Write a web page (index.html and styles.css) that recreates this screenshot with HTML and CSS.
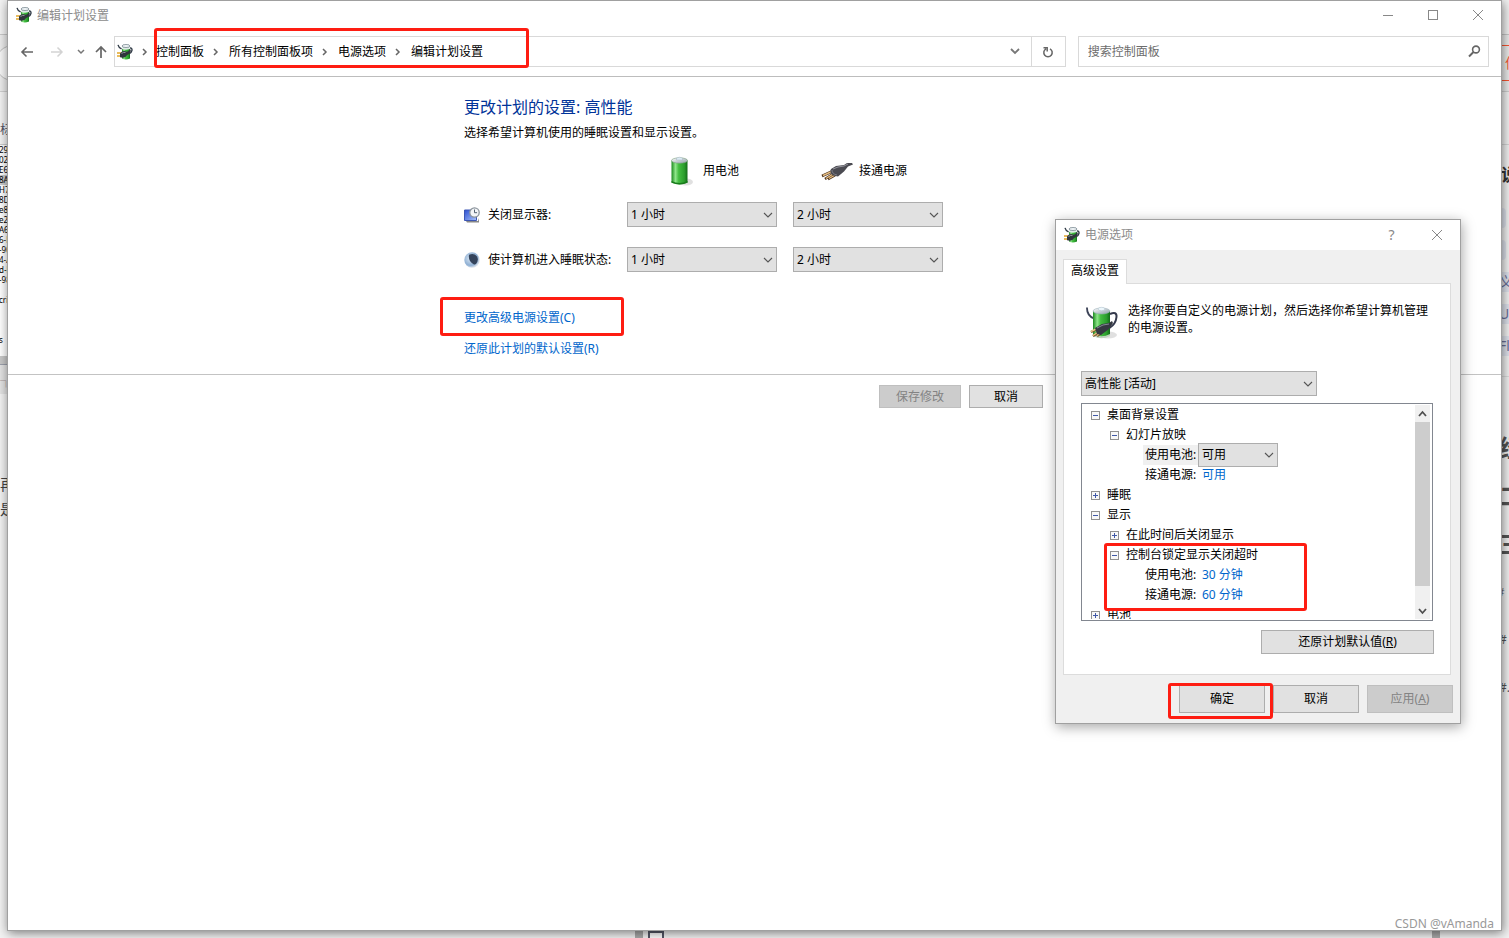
FILE: index.html
```html
<!DOCTYPE html>
<html lang="zh-CN">
<head>
<meta charset="utf-8">
<title>编辑计划设置</title>
<link rel="stylesheet" href="styles.css">
</head>
<body>
<svg class="defs" aria-hidden="true">
  <defs>
    <linearGradient id="green" x1="0" x2="1" y1="0" y2="0">
      <stop offset="0" stop-color="#1c8a1f"/><stop offset=".25" stop-color="#8fe58a"/><stop offset=".45" stop-color="#43bd40"/><stop offset=".8" stop-color="#2a9d2c"/><stop offset="1" stop-color="#126a18"/>
    </linearGradient>
    <linearGradient id="metal" x1="0" x2="1" y1="0" y2="1">
      <stop offset="0" stop-color="#fff"/><stop offset="1" stop-color="#8d9ca6"/>
    </linearGradient>
    <linearGradient id="screen" x1="0" x2="1" y1="0" y2="1">
      <stop offset="0" stop-color="#2b4fd0"/><stop offset="1" stop-color="#a9c3fb"/>
    </linearGradient>
    <radialGradient id="orb" cx=".4" cy=".4" r=".6">
      <stop offset="0" stop-color="#dbe7f3"/><stop offset=".75" stop-color="#8fb0d4"/><stop offset="1" stop-color="#d8e0ea"/>
    </radialGradient>
    <symbol id="power-small" viewBox="0 0 16 16">
      <path d="M1 .8q.6 2.800 3.600 4" fill="none" stroke="#2e3844" stroke-width="1.300"/>
      <path d="M12.500 4q3-.5 2.400 2.600-.6 2.400-2.600 3" fill="none" stroke="#2e3844" stroke-width="1.400"/>
      <path d="M5 2v12.500q3.700 2.200 8 0V2z" fill="url(#green)"/>
      <path d="M5 2v3q3.700 1.500 8 0V2z" fill="#dfeae6"/>
      <ellipse cx="9" cy="2" rx="4" ry="1.500" fill="#f2f7f9" stroke="#667780" stroke-width=".7"/>
      <path d="M0 9h4M0 12h4" stroke="#e2a62a" stroke-width="1.500"/>
      <path d="M3 9.500q1.500-2.500 4-2.500l3 .8q2.400-.6 2.600-2.500l1.200.5q.2 4.500-3.700 5.200-1.700 3.600-7.100 2.300z" fill="#30363d"/>
      <path d="M4.500 9.500q2-1.500 4-1" stroke="#a4abb0" fill="none" stroke-width=".8"/>
    </symbol>
    <symbol id="power-large" viewBox="0 0 32 34">
      <ellipse cx="22" cy="29" rx="9" ry="3.500" fill="#999" opacity=".3"/>
      <path d="M1 1.500q-.3 8 7 11" fill="none" stroke="#3c4357" stroke-width="1.800"/>
      <path d="M24 8q7-3 6.500 3-.7 7-7 11" fill="none" stroke="#34394c" stroke-width="2"/>
      <path d="M7 5v24q8.500 5 17 0V5z" fill="url(#green)"/>
      <path d="M7 28q8.500 4.500 17 0v2q-8.500 4.500-17 0z" fill="#bfd3bd"/>
      <ellipse cx="15.500" cy="5" rx="8.400" ry="3" fill="url(#metal)" stroke="#9baeb8" stroke-width=".6"/>
      <ellipse cx="15.500" cy="3" rx="3.300" ry="1.700" fill="#edf7fc" stroke="#afc0ca" stroke-width=".5"/>
      <path d="M11 23 5 26M13 26l-6 4M15 27l-4 3" stroke="#744b20" stroke-width="2.500"/>
      <path d="M11 22.500 5 25.500M13 25.500l-6 4M15 26.500l-4 3" stroke="#eac889" stroke-width="1.400"/>
      <path d="m9 22 7-4 7-1 3-2 1 2-4 6-8 6-4-1z" fill="#353841"/>
      <path d="m11 22 6-3 6-1" fill="none" stroke="#858995"/>
    </symbol>
    <symbol id="chev-right" viewBox="0 0 8 8"><path d="m2 1 3 3-3 3" fill="none" stroke="#666" stroke-width="1.500"/></symbol>
    <symbol id="chev-down" viewBox="0 0 10 6"><path d="m1 1 4 4 4-4" fill="none" stroke="#555" stroke-width="1.100"/></symbol>
    <symbol id="cross" viewBox="0 0 12 12"><path d="m1 1 10 10M11 1 1 11" fill="none" stroke="#888" stroke-width="1"/></symbol>
    <symbol id="minus" viewBox="0 0 9 9"><rect x=".5" y=".5" width="8" height="8" fill="#f8f8f8" stroke="#919191"/><path d="M2 4.500h5" stroke="#4059a8"/></symbol>
    <symbol id="plus" viewBox="0 0 9 9"><rect x=".5" y=".5" width="8" height="8" fill="#f8f8f8" stroke="#919191"/><path d="M2 4.500h5M4.500 2v5" stroke="#4059a8"/></symbol>
  </defs>
</svg>
<div class="desktop">
  <div class="edge edge-left">
    <div class="tabs"></div>
    <div class="toolbar"><span class="arc"></span></div>
    <div class="heading">标</div>
    <div class="code">
      <span>29(</span><span>021</span><span>E69</span><span class="selected">8A9</span><span>H72</span><span>8D</span><span>e82</span><span>e2</span><span>A6</span><span>6-E</span><span>-90</span><span>4-A</span><span>d-b</span><span>-98</span><span></span><span>crip</span><span></span><span></span><span></span><span>s</span>
    </div>
    <div class="scroll"></div>
    <div class="corner">┐</div>
    <div class="article"><span>再</span><span>是</span></div>
  </div>

  <main class="window">
    <header class="titlebar">
      <svg class="i16"><use href="#power-small"/></svg>
      <h1>编辑计划设置</h1>
      <button aria-label="最小化"><svg width="12" height="12"><path d="M1 6.500h10" stroke="#888"/></svg></button>
      <button aria-label="最大化"><svg width="12" height="12"><rect x="1.500" y="1.500" width="9" height="9" fill="none" stroke="#888"/></svg></button>
      <button aria-label="关闭"><svg width="12" height="12"><use href="#cross"/></svg></button>
    </header>
    <nav class="navbar">
      <div class="history">
        <button aria-label="后退"><svg width="14" height="12"><path d="M13 6H2M6.500 1.500 2 6l4.500 4.500" fill="none" stroke="#666" stroke-width="1.600"/></svg></button>
        <button aria-label="前进"><svg width="14" height="12"><path d="M1 6h11M7.500 1.500 12 6l-4.500 4.500" fill="none" stroke="#d3d3d3" stroke-width="1.500"/></svg></button>
        <button class="recent" aria-label="最近位置"><svg width="8" height="6"><path d="m1 1 3 3 3-3" fill="none" stroke="#777" stroke-width="1.500"/></svg></button>
        <button class="up" aria-label="上移"><svg width="12" height="14"><path d="M6 13V2M1 7l5-5 5 5" fill="none" stroke="#666" stroke-width="1.700"/></svg></button>
      </div>
      <div class="address">
        <svg class="i16"><use href="#power-small"/></svg>
        <svg class="sep"><use href="#chev-right" x="8" y="4" width="8" height="8"/></svg>
        <div class="crumbs">
          <a href="#">控制面板</a><svg class="sep"><use href="#chev-right" x="8" y="4" width="8" height="8"/></svg>
          <a href="#">所有控制面板项</a><svg class="sep"><use href="#chev-right" x="8" y="4" width="8" height="8"/></svg>
          <a href="#">电源选项</a><svg class="sep"><use href="#chev-right" x="8" y="4" width="8" height="8"/></svg>
          <a href="#">编辑计划设置</a>
          <span class="mark mark-path"></span>
        </div>
        <button class="drop" aria-label="以前的位置"><svg width="10" height="7"><path d="m1 1 4 4 4-4" fill="none" stroke="#777" stroke-width="1.800"/></svg></button>
        <button class="refresh" aria-label="刷新"><svg width="12" height="12"><path d="M8 2.800A4.200 4.200 0 1 1 4 2.800M1.500 1.800h3.700v3.700" fill="none" stroke="#666" stroke-width="1.500"/></svg></button>
      </div>
      <label class="search">
        <input type="text" placeholder="搜索控制面板" aria-label="搜索控制面板">
        <svg width="13" height="13"><circle cx="8" cy="4.500" r="3.400" fill="none" stroke="#666" stroke-width="1.600"/><path d="M5.500 7 1 11.500" stroke="#666" stroke-width="2"/></svg>
      </label>
    </nav>

    <section class="plan">
      <div class="column">
        <h2>更改计划的设置: 高性能</h2>
        <p>选择希望计算机使用的睡眠设置和显示设置。</p>
        <div class="settings">
          <span></span>
          <div class="source battery">
            <svg width="24" height="30" viewBox="0 0 24 30"><ellipse cx="16" cy="26" rx="7" ry="3.500" fill="#999" opacity=".3"/><path d="M1.500 4.500v22q8 4 16 0v-22z" fill="url(#green)"/><path d="M1.500 25q8 4 16 0v1.800q-8 3.500-16 0z" fill="#197b1c"/><ellipse cx="9.500" cy="4.500" rx="8" ry="2.700" fill="url(#metal)" stroke="#7ca080" stroke-width=".6"/><path d="M6.500 4V2q3-1.600 6 0v2z" fill="#dcebf4" stroke="#a4b5bf" stroke-width=".5"/></svg>
            用电池
          </div>
          <div class="source plug">
            <svg width="32" height="20" viewBox="0 0 32 20"><path d="m12 10-11 5M12 13l-8 5M14 14l-7 4" stroke="#4d321b" stroke-width="2.600"/><path d="m12 10-10 4.500M12 13l-7 4.500M14 14l-6 3.500" stroke="#e5bd83" stroke-width="1.400"/><path d="m10 8 5-3 8-1 3-2 5 0 1 1.500-5 2-4 5-6 5-5-1q-4-3-2-6.500z" fill="#4b4b52"/><path d="m12 8 5-2 6-1 4-2" fill="none" stroke="#96969e"/><path d="m11 9q0 4 5 5" fill="none" stroke="#7c7c85"/></svg>
            接通电源
          </div>
          <div class="setting"><svg class="i16" viewBox="0 0 16 16"><path d="M.5 3h12v10.500H.5z" fill="url(#screen)" stroke="#3c56b4"/><path d="M2 14h12l1-3v4.500H3z" fill="#888"/><circle cx="10.500" cy="5.500" r="4.700" fill="#f3f5f7" stroke="#8b949c" stroke-width="1.300"/><path d="M10.500 2.500v3.200h2.600" fill="none" stroke="#526170"/></svg>关闭显示器:</div>
          <div class="select"><select aria-label="用电池时关闭显示器"><option>1 小时</option></select><svg><use href="#chev-down"/></svg></div>
          <div class="select"><select aria-label="接通电源时关闭显示器"><option>2 小时</option></select><svg><use href="#chev-down"/></svg></div>
          <div class="setting"><svg class="i16" viewBox="0 0 16 16"><circle cx="8" cy="8" r="7.700" fill="url(#orb)"/><path d="M5 2.800q5-2.300 8 1.700 2 4-1 7.500-.8.700-2 .4Q4 9.500 5 2.800z" fill="#34445c"/></svg>使计算机进入睡眠状态:</div>
          <div class="select"><select aria-label="用电池时睡眠"><option>1 小时</option></select><svg><use href="#chev-down"/></svg></div>
          <div class="select"><select aria-label="接通电源时睡眠"><option>2 小时</option></select><svg><use href="#chev-down"/></svg></div>
        </div>
        <div class="links">
          <div class="link-row"><a href="#">更改高级电源设置(C)</a><span class="mark mark-link"></span></div>
          <div class="link-row"><a href="#">还原此计划的默认设置(R)</a></div>
        </div>
      </div>
    </section>
    <div class="column actions">
      <button class="btn save" disabled>保存修改</button>
      <button class="btn cancel">取消</button>
    </div>
    <footer class="credit">CSDN @vAmanda</footer>
  </main>

  <div class="edge edge-right">
    <div class="tabs"></div>
    <div class="toolbar"><span class="login">信</span></div>
    <div class="band"></div>
    <div class="title">说</div>
    <div class="chips"><span></span><span></span><span>义</span><span>UN</span><span>Flo</span></div>
    <div class="outline"><b>经</b><b>二</b><b>三</b><span class="small">#</span><span>#</span><span>#.</span></div>
  </div>
  <div class="edge edge-bottom"><span class="bar"></span><span class="box"></span><span class="bar last"></span></div>

  <section class="dialog" role="dialog" aria-label="电源选项">
    <header class="titlebar">
      <svg class="i16"><use href="#power-small"/></svg>
      <h1>电源选项</h1>
      <button class="help" aria-label="帮助">?</button>
      <button aria-label="关闭"><svg width="12" height="12"><use href="#cross"/></svg></button>
    </header>
    <div class="dialog-body">
      <button class="tab">高级设置</button>
      <div class="panel">
        <div class="intro">
          <svg width="32" height="34"><use href="#power-large"/></svg>
          <p>选择你要自定义的电源计划，然后选择你希望计算机管理的电源设置。</p>
        </div>
        <div class="select scheme"><select aria-label="电源计划"><option>高性能 [活动]</option></select><svg><use href="#chev-down"/></svg></div>
        <div class="tree">
          <ul>
            <li><div class="node"><svg><use href="#minus"/></svg>桌面背景设置</div>
              <ul><li><div class="node"><svg><use href="#minus"/></svg>幻灯片放映</div>
                <div class="leaf"><span class="name current">使用电池:</span><div class="select inline"><select aria-label="使用电池"><option>可用</option></select><svg><use href="#chev-down"/></svg></div></div>
                <div class="leaf"><span class="name">接通电源:</span><a href="#">可用</a></div>
              </li></ul>
            </li>
            <li><div class="node"><svg><use href="#plus"/></svg>睡眠</div></li>
            <li><div class="node"><svg><use href="#minus"/></svg>显示</div>
              <ul>
                <li><div class="node"><svg><use href="#plus"/></svg>在此时间后关闭显示</div></li>
                <li class="marked"><div class="node"><svg><use href="#minus"/></svg>控制台锁定显示关闭超时</div>
                  <div class="leaf"><span class="name">使用电池:</span><a href="#">30 分钟</a></div>
                  <div class="leaf"><span class="name">接通电源:</span><a href="#">60 分钟</a></div>
                  <span class="mark mark-tree"></span>
                </li>
              </ul>
            </li>
            <li><div class="node"><svg><use href="#plus"/></svg>电池</div></li>
          </ul>
          <div class="scrollbar">
            <svg width="15" height="17"><path d="m4 11 3.500-4 3.500 4" fill="none" stroke="#505050" stroke-width="1.800"/></svg>
            <span class="thumb"></span>
            <svg width="15" height="17"><path d="m4 7 3.500 4L11 7" fill="none" stroke="#505050" stroke-width="1.800"/></svg>
          </div>
        </div>
        <button class="btn restore">还原计划默认值(<u>R</u>)</button>
      </div>
      <div class="dialog-actions">
        <div class="ok"><button class="btn">确定</button><span class="mark mark-ok"></span></div>
        <button class="btn">取消</button>
        <button class="btn" disabled>应用(<u>A</u>)</button>
      </div>
    </div>
  </section>
</div>
</body>
</html>
```

FILE: styles.css
```css
* { box-sizing: border-box; }
body, h1, h2, p, ul { margin: 0; padding: 0; font-weight: 400; }
body, button, select, input {
  font: 12px/16px "Noto Sans", "Noto Sans CJK SC", sans-serif;
  color: #000;
}
button { padding: 0; border: 0; background: none; white-space: nowrap; }
svg { display: block; flex: none; }
a { color: #0066cc; text-decoration: none; }
ul { list-style: none; }
.defs { position: absolute; width: 0; height: 0; }
.i16 { width: 16px; height: 16px; }

.desktop {
  position: relative;
  display: grid;
  grid-template: minmax(0, 1fr) 7px / 7px minmax(0, 1fr) 7px;
  min-height: 100vh;
  background: #f3f3f3;
  overflow: hidden;
}

/* Main window */
.window {
  grid-area: 1 / 2;
  z-index: 1;
  display: flex;
  flex-direction: column;
  background: #fff;
  border: 1px solid #a0a0a0;
  box-shadow: 1px 2px 10px rgba(0, 0, 0, .5);
}
.titlebar { display: flex; align-items: center; height: 28px; padding: 0 1px 0 8px; background: #fff; }
.titlebar h1 { flex: 1; margin-left: 5px; font-size: 12px; line-height: 16px; color: #8c8c8c; }
.window .titlebar h1 { padding-top: 2px; }
.titlebar button { display: grid; place-items: center; width: 45px; height: 28px; }

.navbar { display: flex; height: 48px; padding: 7px 12px 9px; border-bottom: 1px solid #bdbdbd; }
.history { display: flex; align-items: center; width: 94px; }
.history button { width: 14px; margin-right: 16px; }
.history .recent { width: 8px; margin: 0 10px 0 -3px; }
.history .up { width: 12px; margin: 0; }
.address, .search { display: flex; align-items: center; height: 31px; border: 1px solid #d9d9d9; }
.address { flex: 1; padding-left: 2px; }
.sep { width: 25px; height: 16px; }
.crumbs { position: relative; display: flex; align-items: center; flex: 1; margin-left: -2px; white-space: nowrap; }
.crumbs a { color: #000; }
.drop { display: grid; place-items: center; width: 32px; height: 29px; }
.refresh { display: grid; place-items: center; width: 34px; height: 29px; border-left: 1px solid #d9d9d9; }
.search { width: 28%; margin-left: 12px; padding: 0 7px 0 8px; }
.search input { flex: 1; min-width: 0; padding: 0 1px; border: 0; outline: 0; background: none; }
.search input::placeholder { color: #6d6d6d; opacity: 1; }

/* Plan settings */
.plan { padding: 18px 0 17px; border-bottom: 1px solid #c3c3c3; }
.column { width: 581px; max-width: 100%; margin: 0 auto; }
.plan h2 { font-size: 16px; line-height: 24px; color: #003399; }
.plan p { margin-top: 6px; }
.settings {
  display: grid;
  grid-template-columns: 147px 150px 150px;
  grid-template-rows: 22px 25px 25px;
  gap: 20px 16px;
  margin-top: 19px;
  align-items: center;
}
.source { display: flex; align-items: center; height: 22px; white-space: nowrap; }
.battery { gap: 9px; padding-left: 43px; }
.plug { gap: 6px; padding-left: 28px; }
.setting { display: flex; align-items: center; gap: 8px; white-space: nowrap; }
.links { display: grid; gap: 15px; margin-top: 38px; }
.link-row { position: relative; }
.actions { display: flex; justify-content: flex-end; gap: 8px; padding: 10px 2px 0 0; }
.btn { height: 23px; border: 1px solid #adadad; background: #e1e1e1; }
.btn:disabled { color: #838383; background: #ccc; border-color: #bfbfbf; }
.save { width: 82px; }
.cancel { width: 74px; }
.credit { margin-top: auto; padding-right: 7px; text-align: right; line-height: 12px; color: #999; }

.select { display: grid; grid-template-columns: minmax(0, 1fr) 18px; align-items: center; height: 25px; border: 1px solid #adadad; background: #e1e1e1; }
.select select { grid-area: 1 / 1 / 2 / 3; width: 100%; height: 100%; padding: 0 18px 0 3px; border: 0; border-radius: 0; outline: 0; appearance: none; background: none; }
.select svg { grid-area: 1 / 2; width: 10px; height: 6px; margin-left: 5px; pointer-events: none; }

/* Red call-outs over the content */
.mark { position: absolute; z-index: 2; border: 3px solid #fe1d12; border-radius: 3px; pointer-events: none; }
.mark-path { left: -2px; top: -16px; width: 375px; height: 40px; }
.mark-link { left: -24px; top: -13px; width: 184px; height: 39px; }
.mark-tree { left: -6px; top: -2px; width: 203px; height: 68px; }
.mark-ok { inset: -2px -8px -6px -11px; }

/* Dialog */
.dialog {
  position: absolute;
  z-index: 3;
  top: 219px;
  right: 48px;
  width: 406px;
  background: #f0f0f0;
  border: 1px solid #a0a0a0;
  box-shadow: 1px 3px 12px rgba(0, 0, 0, .35);
}
.dialog .titlebar { height: 30px; }
.dialog .help { font-size: 14px; color: #888; }
.dialog-body { padding: 9px 7px 10px; }
.tab { display: block; position: relative; z-index: 1; width: 64px; height: 25px; margin-bottom: -1px; padding-bottom: 2px; border: 1px solid #dcdcdc; border-bottom: 0; background: #fff; }
.panel { display: flex; flex-direction: column; margin-right: 2px; padding: 18px 16px 20px 17px; border: 1px solid #dcdcdc; background: #fff; }
.intro { display: flex; gap: 10px; padding: 4px 0 0 5px; height: 69px; }
.intro p { line-height: 17px; margin-top: -4px; width: 302px; }
.scheme { width: 236px; }
.tree { display: flex; height: 218px; margin: 7px 1px 9px 0; padding: 0 2px 1px 0; border: 1px solid #828790; overflow: hidden; }
.tree > ul { flex: 1; padding: 1px 0 0 9px; height: 215px; overflow: hidden; }
.tree ul ul { padding-left: 19px; }
.node, .leaf { display: flex; align-items: center; height: 20px; white-space: nowrap; }
.node svg { width: 9px; height: 9px; margin-right: 7px; }
.leaf { padding-left: 33px; }
.name { width: 55px; padding-left: 2px; line-height: 20px; }
.leaf a { margin-left: 4px; }
.current { background: #f0f0f0; }
.inline { width: 80px; height: 24px; }
.marked { position: relative; }
.scrollbar { display: flex; flex-direction: column; width: 15px; margin-top: 1px; background: #f0f0f0; }
.thumb { flex: none; height: 164px; background: #cdcdcd; }
.scrollbar svg:last-child { margin-top: auto; }
.restore { align-self: flex-end; width: 173px; height: 24px; }
.dialog-actions { display: flex; justify-content: flex-end; gap: 8px; margin-top: 10px; }
.dialog-actions .btn { width: 86px; height: 28px; }
.ok { position: relative; }

/* Page visible behind the window */
.edge { overflow: hidden; white-space: nowrap; }
.edge-left { grid-area: 1 / 1 / 3 / 2; height: 100vh; }
.edge-right { grid-area: 1 / 3 / 3 / 4; height: 100vh; }
.tabs { height: 35px; border-bottom: 1px solid #c8c8c8; }
.toolbar { height: 57px; padding-top: 10px; background: #ececec; border-bottom: 1px solid #d0d0d0; }
.edge-left .toolbar { padding-left: 0; }
.arc { display: block; width: 36px; height: 36px; margin-left: -5px; border: 1px solid #bbb; border-radius: 50%; background: #f6f6f6; }
.heading { height: 53px; padding-top: 30px; border-bottom: 1px solid #ccc; color: #556; }
.code { height: 211px; font: 8px/10px "Noto Sans", sans-serif; background: #fff; }
.code span { display: block; height: 10px; margin-left: -1px; }
.code .selected { background: #ccc; }
.scroll { height: 9px; background: #c8c8c8; border-bottom: 1px solid #9ca0ac; }
.corner { height: 29px; padding-top: 9px; background: #e3e3e3; color: #a99; }
.article { padding-top: 78px; font-size: 15px; line-height: 25px; color: #444; }
.article span { display: block; }
.login { display: block; width: 60px; height: 36px; padding-left: 3px; border: 1px solid #fc5531; border-left: 0; font-size: 14px; line-height: 34px; color: #fc5531; }
.band { height: 53px; border-bottom: 1px solid #d6d6d6; }
.title { height: 57px; margin-left: -1px; padding-top: 18px; font-size: 17px; line-height: 24px; font-weight: 700; color: #333; }
.chips { display: grid; align-content: start; gap: 12px; height: 175px; padding-top: 6px; border-bottom: 1px solid #ddd; font-size: 14px; line-height: 20px; color: #6a7199; }
.chips span { height: 20px; background: #e0e4ee; text-indent: -3px; }
.chips span:nth-child(-n+2) { width: 4px; border-radius: 0 10px 10px 0; }
.outline { color: #555; line-height: 48px; padding-top: 47px; }
.outline b, .outline span { display: block; height: 48px; text-indent: -3px; }
.outline b { font-size: 24px; }
.outline .small { font-size: 10px; text-indent: -4px; }
.edge-bottom { grid-area: 2 / 2; display: flex; gap: 5px; padding: 0 62px 0 628px; }
.bar { width: 8px; background: #aaa; }
.last { margin-left: auto; }
.box { width: 16px; height: 12px; border: 2px solid #555868; background: #fff; }
```
